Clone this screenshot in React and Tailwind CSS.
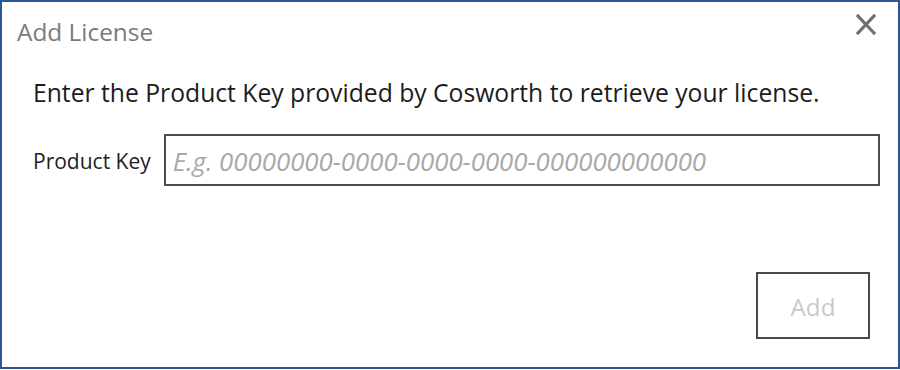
import React from "react";

export default function App() {
  return (
    <div
      className="w-[900px] h-[369px] border-2 border-[#2b579a] bg-white flex flex-col"
      style={{ fontFamily: '"Open Sans", sans-serif' }}
    >
      <div className="flex items-start justify-between pt-[14px] pl-[15px] pr-[22px]">
        <div className="text-[24.4px] leading-[32px] text-[#7b7b7b]">Add License</div>
        <button className="mt-[-2px] w-[20px] h-[21px] flex items-center justify-center" aria-label="Close">
          <svg width="20" height="21" viewBox="0 0 20 21">
            <path d="M2 2 L18 19 M18 2 L2 19" stroke="#707070" strokeWidth="3.2" strokeLinecap="square" />
          </svg>
        </button>
      </div>
      <div className="flex flex-col flex-1 pl-[31px] pr-[18px] pb-[28px]">
        <div className="mt-[29px] text-[24.7px] leading-[32px] text-[#1c1c1c]">
          Enter the Product Key provided by Cosworth to retrieve your license.
        </div>
        <div className="mt-[25px] flex items-center">
          <div className="text-[21px] leading-[28px] text-[#222] mt-[2px]">Product Key</div>
          <div className="ml-[13px] flex-1 h-[52px] border-2 border-[#4d4d4d] flex items-center pl-[7px]">
            <span className="italic text-[25.8px] leading-[32px] text-[#a8a8a8] mt-[1px]">
              E.g. 00000000-0000-0000-0000-000000000000
            </span>
          </div>
        </div>
        <div className="mt-auto flex justify-end pr-[10px]">
          <button className="w-[114px] h-[67px] border-2 border-[#4a4a4a] flex items-center justify-center text-[24.2px] leading-[32px] text-[#c9c9c9] pt-[3px]">
            Add
          </button>
        </div>
      </div>
    </div>
  );
}
